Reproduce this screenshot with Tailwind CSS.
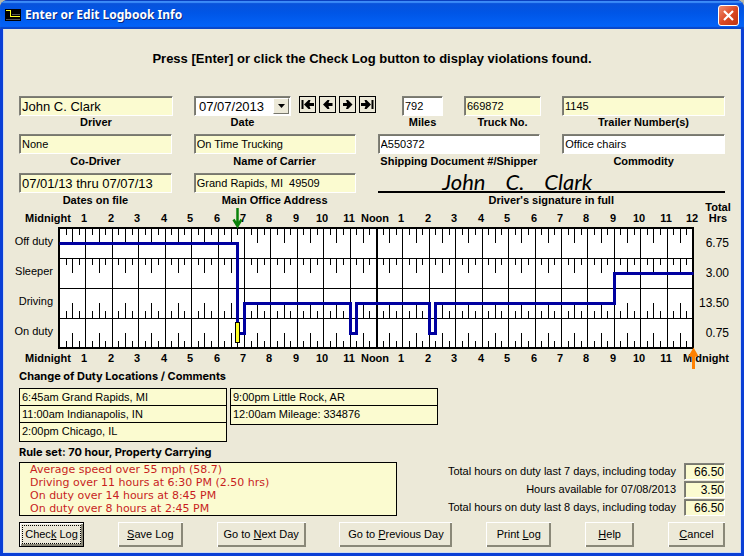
<!DOCTYPE html>
<html lang="en">
<head>
    <meta charset="UTF-8">
    <meta name="viewport" content="width=device-width, initial-scale=1.0">
    <title>Enter or Edit Logbook Info</title>
    <script src="https://cdn.jsdelivr.net/npm/@tailwindcss/browser@4"></script>
</head>
<body class="bg-[#b9b9a8] font-['Liberation_Sans',Arial,sans-serif] text-[11px] text-black">
    <div class="min-h-screen flex flex-col rounded-t-lg overflow-hidden bg-[#0a3fd6]">
        <!-- Title Bar -->
        <header class="h-[29px] shrink-0 flex items-center gap-1 pl-[5px] pr-[5px] bg-linear-to-b from-[#0a52d8] from-0% via-[#0055e6] via-40% to-[#0465fb] border-t border-[#0a3fbf] shadow-[inset_0_2px_1px_#3c8cf8,inset_0_-2px_1px_#0a46c8]">
            <svg class="w-4 h-3" viewBox="0 0 16 12" shape-rendering="crispEdges" aria-hidden="true">
                <rect width="16" height="12" fill="#000"/>
                <path d="M7 5.500H15M1 10.500H15" stroke="#555" stroke-width="1"/>
                <path d="M1 1.500H5.500V7.500H15" fill="none" stroke="#ffff20" stroke-width="1"/>
            </svg>
            <h1 class="grow font-['Noto_Sans','Open_Sans',sans-serif] font-bold text-[12px] leading-4 text-white [text-shadow:1px_1px_0_#0a2a80]">Enter or Edit Logbook Info</h1>
            <button type="button" aria-label="Close" class="w-[21px] h-[21px] rounded-[3px] border border-white bg-linear-to-br from-[#ee8a6c] via-[#dc4a24] to-[#c03410] flex items-center justify-center">
                <svg class="w-[13px] h-[13px]" viewBox="0 0 13 13" aria-hidden="true">
                    <path d="M2 2L11 11M11 2L2 11" stroke="#fff" stroke-width="2.200"/>
                </svg>
            </button>
        </header>

        <!-- Window Body -->
        <main class="grow mx-[3px] mb-[3px] pt-5 pb-[6px] bg-[#ece9d8] shadow-[inset_1px_0_0_#cfdcf0,inset_-1px_-1px_0_#cfdcf0]">
            <p class="mb-[27px] text-center font-bold text-[13px] leading-5">Press [Enter] or click the Check Log button to display violations found.</p>

            <form class="px-4">
                <!-- Driver, Date, Equipment -->
                <div class="grid grid-cols-[154fr_187fr_41fr_77fr_163fr] gap-x-[21px] mb-[6px]">
                    <div class="flex flex-col">
                        <input id="driver" readonly value="John C. Clark" class="w-full h-5 px-0.5 text-[13px] bg-[#fbfbd0] border border-t-[#808078] border-l-[#808078] border-r-white border-b-white shadow-[inset_1px_1px_0_#77776c] outline-none">
                        <label for="driver" class="text-center font-bold leading-3">Driver</label>
                    </div>
                    <div class="flex gap-2">
                        <div class="w-[97px] flex flex-col">
                            <div class="relative">
                                <select id="date" class="block appearance-none w-full h-5 px-1 text-[13px] bg-white border border-t-[#808078] border-l-[#808078] border-r-white border-b-white shadow-[inset_1px_1px_0_#77776c] outline-none">
                                    <option>07/07/2013</option>
                                </select>
                                <span class="absolute right-0.5 top-0.5 w-4 h-4 bg-[#ece9d8] border border-t-white border-l-white border-r-[#77776c] border-b-[#77776c] flex items-center justify-center pointer-events-none">
                                    <svg class="w-[7px] h-1" viewBox="0 0 7 4" aria-hidden="true"><path d="M0 0H7L3.500 4Z"/></svg>
                                </span>
                            </div>
                            <label for="date" class="text-center font-bold leading-3">Date</label>
                        </div>
                        <div class="flex gap-[3px]">
                            <button type="button" aria-label="First day" class="w-[17px] h-[17px] border border-black flex items-center justify-center">
                                <svg class="w-[13px] h-[11px]" viewBox="0 0 13 11" aria-hidden="true"><path d="M1.500 1V10" stroke="#000" stroke-width="2"/><path d="M3 5.500L7.500 1H9.500L8.500 4H13V7H8.500L9.500 10H7.500Z"/></svg>
                            </button>
                            <button type="button" aria-label="Previous day" class="w-[17px] h-[17px] border border-black flex items-center justify-center">
                                <svg class="w-[13px] h-[11px]" viewBox="0 0 13 11" aria-hidden="true"><path d="M2 5.500L6.500 1H8.500L7.500 4H11.500V7H7.500L8.500 10H6.500Z"/></svg>
                            </button>
                            <button type="button" aria-label="Next day" class="w-[17px] h-[17px] border border-black flex items-center justify-center">
                                <svg class="w-[13px] h-[11px]" viewBox="0 0 13 11" aria-hidden="true"><path d="M11.500 5.500L7 1H5L6 4H2V7H6L5 10H7Z"/></svg>
                            </button>
                            <button type="button" aria-label="Last day" class="w-[17px] h-[17px] border border-black flex items-center justify-center">
                                <svg class="w-[13px] h-[11px]" viewBox="0 0 13 11" aria-hidden="true"><path d="M11.500 1V10" stroke="#000" stroke-width="2"/><path d="M10 5.500L5.500 1H3.500L4.500 4H0V7H4.500L3.500 10H5.500Z"/></svg>
                            </button>
                        </div>
                    </div>
                    <div class="flex flex-col">
                        <input id="miles" value="792" class="w-full h-5 px-0.5 bg-white border border-t-[#808078] border-l-[#808078] border-r-white border-b-white shadow-[inset_1px_1px_0_#77776c] outline-none">
                        <label for="miles" class="text-center font-bold leading-3">Miles</label>
                    </div>
                    <div class="flex flex-col">
                        <input id="truck" readonly value="669872" class="w-full h-5 px-0.5 bg-[#fbfbd0] border border-t-[#808078] border-l-[#808078] border-r-white border-b-white shadow-[inset_1px_1px_0_#77776c] outline-none">
                        <label for="truck" class="text-center font-bold leading-3">Truck No.</label>
                    </div>
                    <div class="flex flex-col">
                        <input id="trailer" readonly value="1145" class="w-full h-5 px-0.5 bg-[#fbfbd0] border border-t-[#808078] border-l-[#808078] border-r-white border-b-white shadow-[inset_1px_1px_0_#77776c] outline-none">
                        <label for="trailer" class="text-center font-bold leading-3">Trailer Number(s)</label>
                    </div>
                </div>

                <!-- Carrier, Shipment, Signature -->
                <div class="grid grid-cols-[153fr_162fr_163fr_163fr] gap-x-[22px] gap-y-[6px]">
                    <div class="flex flex-col gap-px">
                        <input id="codriver" readonly value="None" class="w-full h-5 px-0.5 bg-[#fbfbd0] border border-t-[#808078] border-l-[#808078] border-r-white border-b-white shadow-[inset_1px_1px_0_#77776c] outline-none">
                        <label for="codriver" class="text-center font-bold leading-3">Co-Driver</label>
                    </div>
                    <div class="flex flex-col gap-px">
                        <input id="carrier" readonly value="On Time Trucking" class="w-full h-5 px-0.5 bg-[#fbfbd0] border border-t-[#808078] border-l-[#808078] border-r-white border-b-white shadow-[inset_1px_1px_0_#77776c] outline-none">
                        <label for="carrier" class="text-center font-bold leading-3">Name of Carrier</label>
                    </div>
                    <div class="flex flex-col gap-px">
                        <input id="shipping" value="A550372" class="w-full h-5 px-0.5 bg-white border border-t-[#808078] border-l-[#808078] border-r-white border-b-white shadow-[inset_1px_1px_0_#77776c] outline-none">
                        <label for="shipping" class="text-center font-bold leading-3">Shipping Document #/Shipper</label>
                    </div>
                    <div class="flex flex-col gap-px">
                        <input id="commodity" value="Office chairs" class="w-full h-5 px-0.5 bg-white border border-t-[#808078] border-l-[#808078] border-r-white border-b-white shadow-[inset_1px_1px_0_#77776c] outline-none">
                        <label for="commodity" class="text-center font-bold leading-3">Commodity</label>
                    </div>
                    <div class="flex flex-col gap-px">
                        <input id="dates" readonly value="07/01/13 thru 07/07/13" class="w-full h-5 px-0.5 text-[13px] bg-[#fbfbd0] border border-t-[#808078] border-l-[#808078] border-r-white border-b-white shadow-[inset_1px_1px_0_#77776c] outline-none">
                        <label for="dates" class="text-center font-bold leading-3">Dates on file</label>
                    </div>
                    <div class="flex flex-col gap-px">
                        <input id="office" readonly value="Grand Rapids, MI  49509" class="w-full h-5 px-0.5 bg-[#fbfbd0] border border-t-[#808078] border-l-[#808078] border-r-white border-b-white shadow-[inset_1px_1px_0_#77776c] outline-none">
                        <label for="office" class="text-center font-bold leading-3">Main Office Address</label>
                    </div>
                    <div class="col-span-2 flex flex-col gap-px">
                        <div class="h-5 flex items-end justify-center gap-5 pr-[68px] border-b-2 border-black font-['Lucida_Handwriting',Lato,cursive] italic text-[22px] leading-[18px]">
                            <span>John</span><span>C.</span><span>Clark</span>
                        </div>
                        <p class="text-center font-bold leading-3">Driver's signature in full</p>
                    </div>
                </div>
            </form>

            <!-- Duty Status Graph -->
            <svg id="graph" class="block w-full h-auto -mt-[5px] overflow-visible" viewBox="0 0 738 167" role="img" aria-label="Duty status graph">
                <rect x="56" y="27" width="634" height="120" fill="#fff"/>
                <g id="grid" stroke="#000" stroke-width="1" shape-rendering="crispEdges"></g>
                <rect x="56" y="27" width="634" height="120" fill="none" stroke="#000" stroke-width="2"/>
                <path id="duty" fill="none" stroke="#0000a0" stroke-width="3"/>
                <g id="hours" class="text-[11px] font-bold" text-anchor="middle"></g>
                <g class="text-[11px]" text-anchor="end">
                    <text x="50" y="44">Off duty</text>
                    <text x="50" y="74">Sleeper</text>
                    <text x="50" y="104">Driving</text>
                    <text x="50" y="134">On duty</text>
                </g>
                <g class="text-[12px]" text-anchor="end">
                    <text x="726" y="46">6.75</text>
                    <text x="726" y="76">3.00</text>
                    <text x="726" y="106">13.50</text>
                    <text x="726" y="136">0.75</text>
                </g>
                <g class="text-[11px] font-bold" text-anchor="middle">
                    <text x="715" y="10">Total</text>
                    <text x="715" y="21">Hrs</text>
                </g>
                <!-- Selected change of duty -->
                <rect x="232.500" y="121.500" width="4" height="20" fill="#ffff20" stroke="#000"/>
                <path d="M234.500 7V23M230.500 18.500L234.500 25L238.500 18.500" fill="none" stroke="#0a820a" stroke-width="2.500"/>
                <!-- End of log -->
                <path d="M690.500 168V152M687 155.500L690.500 149.500L694 155.500" fill="none" stroke="#ff8000" stroke-width="3"/>
            </svg>

            <div class="px-4">
                <!-- Change of Duty Locations -->
                <h2 class="mt-[1px] mb-[5px] font-[Inter,Arial,sans-serif] font-bold leading-[14px]">Change of Duty Locations / Comments</h2>
                <div class="flex items-start gap-[3px] h-[54px]">
                    <ul class="w-[208px] bg-[#fbfbd0] border border-black divide-y divide-black leading-4">
                        <li class="px-0.5">6:45am Grand Rapids, MI</li>
                        <li class="px-0.5">11:00am Indianapolis, IN</li>
                        <li class="px-0.5 pb-0.5">2:00pm Chicago, IL</li>
                    </ul>
                    <ul class="w-[208px] bg-[#fbfbd0] border border-black divide-y divide-black leading-4">
                        <li class="px-0.5">9:00pm Little Rock, AR</li>
                        <li class="px-0.5 pb-0.5">12:00am Mileage: 334876</li>
                    </ul>
                </div>

                <!-- Violations and Totals -->
                <h2 class="mt-[3px] mb-[3px] font-[Inter,Arial,sans-serif] font-bold leading-[14px]">Rule set: 70 hour, Property Carrying</h2>
                <div class="flex justify-between items-start">
                    <ul class="w-[378px] h-[54px] pl-[10px] bg-[#fbfbd0] border border-black font-['DejaVu_Sans',Verdana,sans-serif] text-[11px] leading-[13px] text-[#c81e1e]">
                        <li>Average speed over 55 mph (58.7)</li>
                        <li>Driving over 11 hours at 6:30 PM (2.50 hrs)</li>
                        <li>On duty over 14 hours at 8:45 PM</li>
                        <li>On duty over 8 hours at 2:45 PM</li>
                    </ul>
                    <div class="grid grid-cols-[auto_41px] gap-x-2 gap-y-px pt-px items-center text-right">
                        <label for="last7">Total hours on duty last 7 days, including today</label>
                        <input id="last7" readonly value="66.50" class="w-full h-[17px] text-right text-[12px] bg-[#fbfbd0] border border-t-[#808078] border-l-[#808078] border-r-white border-b-white shadow-[inset_1px_1px_0_#77776c] outline-none">
                        <label for="available">Hours available for 07/08/2013</label>
                        <input id="available" readonly value="3.50" class="w-full h-[17px] text-right text-[12px] bg-[#fbfbd0] border border-t-[#808078] border-l-[#808078] border-r-white border-b-white shadow-[inset_1px_1px_0_#77776c] outline-none">
                        <label for="last8">Total hours on duty last 8 days, including today</label>
                        <input id="last8" readonly value="66.50" class="w-full h-[17px] text-right text-[12px] bg-[#fbfbd0] border border-t-[#808078] border-l-[#808078] border-r-white border-b-white shadow-[inset_1px_1px_0_#77776c] outline-none">
                    </div>
                </div>

                <!-- Buttons -->
                <div class="flex justify-between mt-[6px]">
                    <button type="button" class="w-[65px] h-[25px] bg-[#ece9d8] border border-black shadow-[inset_1px_1px_0_#fff,inset_-2px_-2px_0_#8a8878] p-[2px]"><span class="flex items-center justify-center h-full border border-dotted border-black whitespace-pre">Chec<u>k</u> Log</span></button>
                    <button type="button" class="w-[65px] h-[25px] bg-[#ece9d8] shadow-[inset_1px_1px_0_#fff,inset_-2px_-2px_0_#8a8878]"><u>S</u>ave Log</button>
                    <button type="button" class="w-[89px] h-[25px] bg-[#ece9d8] shadow-[inset_1px_1px_0_#fff,inset_-2px_-2px_0_#8a8878]">Go to <u>N</u>ext Day</button>
                    <button type="button" class="w-[113px] h-[25px] bg-[#ece9d8] shadow-[inset_1px_1px_0_#fff,inset_-2px_-2px_0_#8a8878]">Go to <u>P</u>revious Day</button>
                    <button type="button" class="w-[65px] h-[25px] bg-[#ece9d8] shadow-[inset_1px_1px_0_#fff,inset_-2px_-2px_0_#8a8878]">Print <u>L</u>og</button>
                    <button type="button" class="w-[49px] h-[25px] bg-[#ece9d8] shadow-[inset_1px_1px_0_#fff,inset_-2px_-2px_0_#8a8878]"><u>H</u>elp</button>
                    <button type="button" class="w-[57px] h-[25px] bg-[#ece9d8] shadow-[inset_1px_1px_0_#fff,inset_-2px_-2px_0_#8a8878]"><u>C</u>ancel</button>
                </div>
            </div>
        </main>
    </div>

    <script>
        const SVG = 'http://www.w3.org/2000/svg';
        const LEFT = 56, TOP = 27, ROW = 30, WIDTH = 634;

        // Duty changes: [start hour, row]
        const changes = [[0, 0], [6.75, 3], [7, 2], [11, 3], [11.25, 2], [14, 3], [14.25, 2], [21, 1]];

        function hourX(hour) {
            return Math.round(LEFT + hour * WIDTH / 24);
        }

        function add(parent, name, attrs, text) {
            const el = document.createElementNS(SVG, name);
            for (const key in attrs) el.setAttribute(key, attrs[key]);
            if (text) el.textContent = text;
            document.getElementById(parent).appendChild(el);
        }

        function line(x1, y1, x2, y2, width) {
            add('grid', 'line', { x1, y1, x2, y2, 'stroke-width': width || 1 });
        }

        // Row lines
        for (let r = 1; r < 4; r++) {
            line(LEFT, TOP + r * ROW + 0.5, LEFT + WIDTH, TOP + r * ROW + 0.5);
        }

        // Hour lines and quarter hour ticks
        for (let q = 1; q < 96; q++) {
            const x = hourX(q / 4) + 0.5;
            if (q % 4 === 0) {
                line(x, TOP, x, TOP + 4 * ROW, q === 48 ? 2 : 1);
                continue;
            }
            const len = q % 2 === 0 ? 15 : 7;
            for (let r = 0; r < 4; r++) {
                const y = TOP + r * ROW;
                if (r < 2) line(x, y, x, y + len);
                else line(x, y + ROW - len, x, y + ROW);
            }
        }

        // Hour labels above and below
        [21, 161].forEach(function(y) {
            for (let h = 0; h <= 24; h++) {
                let label = String(h % 12 || 12);
                let x = hourX(h) - 1;
                if (h === 0) { label = 'Midnight'; x = 45; }
                if (h === 12) label = 'Noon';
                if (h === 24 && y > 100) { label = 'Midnight'; x = 703; }
                add('hours', 'text', { x, y }, label);
            }
        });

        // Duty line
        let d = '';
        changes.forEach(function(change, i) {
            const y = TOP + change[1] * ROW + 15.5;
            const end = i + 1 < changes.length ? changes[i + 1][0] : 24;
            d += (i ? 'L' : 'M') + (hourX(change[0]) + 0.5) + ' ' + y + 'H' + (hourX(end) + 0.5);
        });
        document.getElementById('duty').setAttribute('d', d);
    </script>
</body>
</html>
